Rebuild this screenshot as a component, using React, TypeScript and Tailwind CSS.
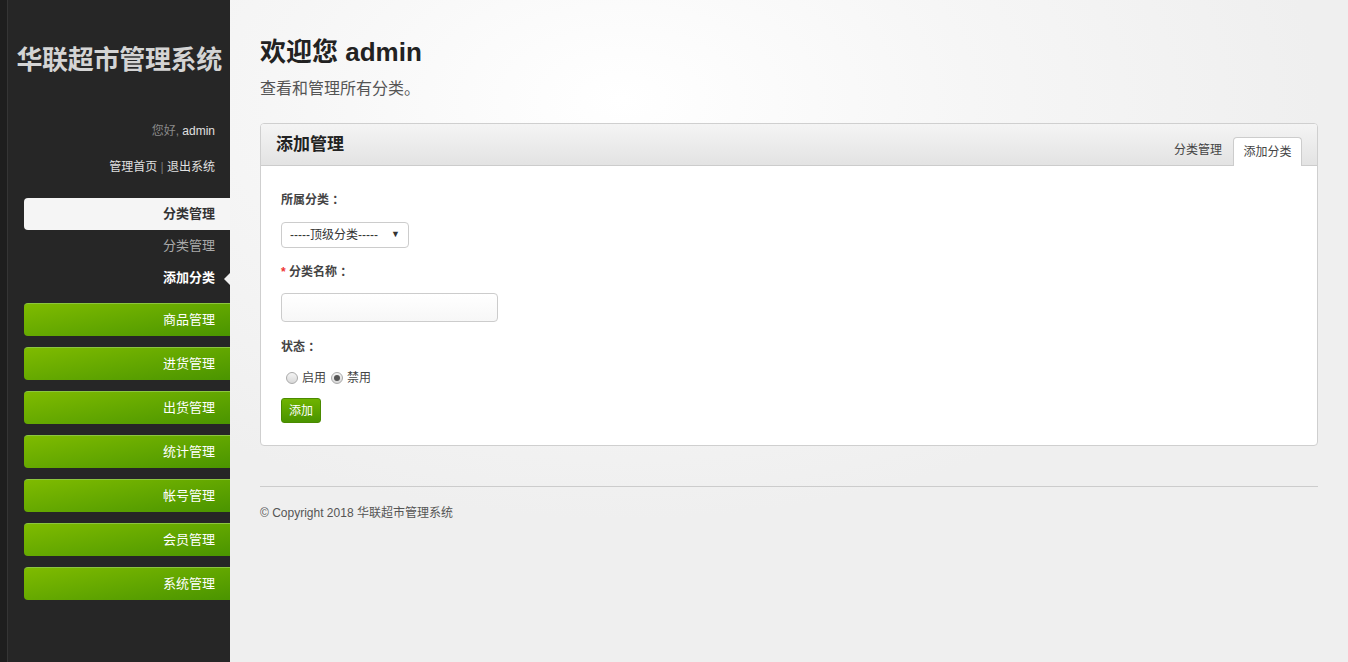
import React from "react";

const font = { fontFamily: '"Liberation Sans", Arial, "Noto Sans CJK SC", sans-serif' };

const greenMenus = ["商品管理", "进货管理", "出货管理", "统计管理", "帐号管理", "会员管理", "系统管理"];

export default function App() {
  return (
    <div className="flex h-[662px] w-[1348px] overflow-hidden" style={font}>
      {/* Sidebar */}
      <aside className="relative flex h-full w-[230px] shrink-0 bg-[#262626]">
        <div className="h-full w-[8px] shrink-0 border-r border-[#353535] bg-[#1e1e1e]" />
        <div className="flex flex-1 flex-col">
          <div className="pt-[43px] pr-[8px] text-right text-[26px] leading-[34px] font-bold tracking-[-0.3px] text-[#d4d4d4]">
            华联超市管理系统
          </div>
          <div className="mt-[46px] pr-[15px] text-right text-[12px] leading-[16px]">
            <span className="text-[#8a8a8a]">您好, </span>
            <span className="text-[#e0e0e0]">admin</span>
          </div>
          <div className="mt-[20px] pr-[15px] text-right text-[12px] leading-[16px] text-[#e0e0e0]">
            管理首页 <span className="text-[#777]">|</span> 退出系统
          </div>
          <div className="mt-[23px] ml-[16px] flex h-[32px] items-center justify-end rounded-l-[4px] bg-[#f5f5f5] pr-[15px] text-[13px] font-bold text-[#333]">
            分类管理
          </div>
          <div className="mt-[7px] pr-[15px] text-right text-[13px] leading-[18px] text-[#aaa]">分类管理</div>
          <div className="relative mt-[14px] pr-[15px] text-right text-[13px] leading-[18px] font-bold text-white">
            添加分类
            <span className="absolute right-0 top-[4px] h-0 w-0 border-y-[6px] border-r-[6px] border-y-transparent border-r-[#f0f0f0]" />
          </div>
          <div className="mt-[16px] flex flex-col gap-[11px] pl-[16px]">
            {greenMenus.map((m) => (
              <div
                key={m}
                className="flex h-[33px] items-center justify-end rounded-l-[4px] border-t border-[#8cc63f] bg-[linear-gradient(170deg,#7fbb00_0%,#64a800_50%,#4a9400_100%)] pr-[15px] text-[13px] text-white"
              >
                {m}
              </div>
            ))}
          </div>
        </div>
      </aside>

      {/* Main */}
      <main className="flex-1 bg-[radial-gradient(ellipse_700px_420px_at_35%_15%,#ffffff_0%,#f6f6f6_50%,#efefef_100%)] px-[30px]">
        <h1 className="pt-[36px] text-[26px] leading-[32px] font-bold text-[#222]">欢迎您 admin</h1>
        <p className="mt-[10px] text-[16px] leading-[22px] text-[#555]">查看和管理所有分类。</p>

        <div className="mt-[23px] overflow-hidden rounded-[4px] border border-[#cfcfcf] bg-white">
          <div className="flex h-[42px] items-end justify-between border-b border-[#cccccc] bg-[linear-gradient(#f4f4f4,#e3e3e3)] pl-[15px] pr-[15px]">
            <div className="self-center text-[17px] font-bold text-[#222]">添加管理</div>
            <div className="flex items-end text-[12px] text-[#444]">
              <div className="mr-[11px] pb-[6px]">分类管理</div>
              <div className="-mb-px flex h-[29px] w-[69px] items-center justify-center rounded-t-[4px] border border-b-0 border-[#ccc] bg-white">
                添加分类
              </div>
            </div>
          </div>
          <div className="px-[20px] pt-[26px] pb-[22px] text-[12px] text-[#444]">
            <div className="font-bold leading-[16px] text-[#444]">所属分类 ：</div>
            <div className="mt-[14px] flex h-[26px] w-[128px] items-center justify-between rounded-[4px] border border-[#ccc] bg-white px-[8px] text-[12px] text-[#333]">
              <span>-----顶级分类-----</span>
              <span className="text-[9px] text-[#333]">▼</span>
            </div>
            <div className="mt-[16px] font-bold leading-[16px]">
              <span className="text-[#e33]">* </span>分类名称 ：
            </div>
            <div className="mt-[13px] h-[29px] w-[217px] rounded-[4px] border border-[#ccc] bg-[linear-gradient(#fff,#f7f7f7)]" />
            <div className="mt-[17px] font-bold leading-[16px]">状态 ：</div>
            <div className="mt-[14px] flex items-center text-[12px] text-[#444]">
              <span className="ml-[5px] inline-block h-[12px] w-[12px] rounded-full border border-[#aaa] bg-[linear-gradient(#f4f4f4,#d8d8d8)]" />
              <span className="ml-[4px]">启用</span>
              <span className="ml-[5px] flex h-[12px] w-[12px] items-center justify-center rounded-full border border-[#aaa] bg-[linear-gradient(#f4f4f4,#d8d8d8)]">
                <span className="h-[6px] w-[6px] rounded-full bg-[#555]" />
              </span>
              <span className="ml-[4px]">禁用</span>
            </div>
            <div className="mt-[11px] flex h-[25px] w-[40px] items-center justify-center rounded-[3px] border border-[#4a8a00] bg-[linear-gradient(#6fb300,#4a9400)] text-[12px] text-white">
              添加
            </div>
          </div>
        </div>

        <div className="mt-[40px] border-t border-[#cccccc]" />
        <div className="mt-[18px] text-[12px] leading-[16px] text-[#555]">© Copyright 2018 华联超市管理系统</div>
      </main>
    </div>
  );
}
